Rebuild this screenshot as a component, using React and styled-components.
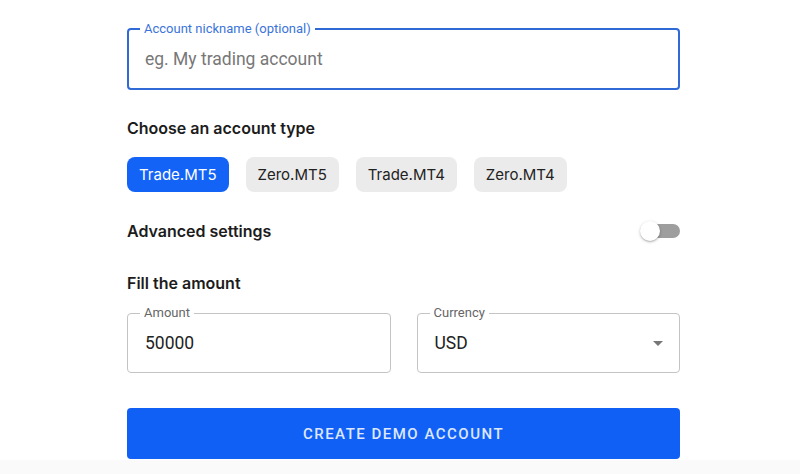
import styled, { createGlobalStyle } from "styled-components";

const Global = createGlobalStyle`
  body {
    margin: 0;
    background: #ffffff;
    font-family: Roboto, "Liberation Sans", sans-serif;
  }
`;

const Page = styled.div`
  min-height: 474px;
  display: flex;
  flex-direction: column;
`;

const Form = styled.div`
  width: 553px;
  margin: 0 0 0 127px;
  padding: 23px 0 1px;
  display: flex;
  flex-direction: column;
`;

const Footer = styled.div`
  flex: 1;
  background: #fafafa;
`;

const Field = styled.fieldset`
  margin: 0;
  padding: 0 ${(p) => (p.focused ? 11 : 12)}px 5px;
  border: ${(p) => (p.focused ? "2px solid #2f6ad6" : "1px solid #c4c4c4")};
  border-radius: 4px;
  min-width: 0;
  flex: 1;
`;

const Legend = styled.legend`
  padding: 0 4px;
  font-size: 13px;
  line-height: 12px;
  color: ${(p) => (p.focused ? "#3b74d9" : "#666")};
`;

const Input = styled.input`
  display: block;
  width: 100%;
  box-sizing: border-box;
  height: ${(p) => p.h}px;
  border: none;
  outline: none;
  padding: 0 0 0 5px;
  background: transparent;
  font-family: Roboto, "Liberation Sans", sans-serif;
  font-size: 17.5px;
  color: #222;
  &::placeholder {
    color: #777;
  }
`;

const SelectValue = styled.div`
  height: 48px;
  display: flex;
  align-items: center;
  justify-content: space-between;
  padding-left: 5px;
  font-size: 17.5px;
  color: #222;
`;

const Caret = styled.span`
  width: 0;
  height: 0;
  border-left: 5px solid transparent;
  border-right: 5px solid transparent;
  border-top: 5px solid #777;
  margin-right: 4px;
`;

const Heading = styled.h3`
  margin: 0;
  font-family: Inter, "Noto Sans", sans-serif;
  font-size: 16px;
  line-height: 24px;
  font-weight: 600;
  color: #1c1c1c;
`;

const ChipRow = styled.div`
  display: flex;
  gap: 17px;
  margin-top: 17px;
`;

const Chip = styled.button`
  height: 35px;
  padding: 0 12px;
  border: none;
  border-radius: 8px;
  font-family: Inter, "Noto Sans", sans-serif;
  font-size: 15px;
  background: ${(p) => (p.active ? "#1263f6" : "#ebebeb")};
  color: ${(p) => (p.active ? "#fff" : "#222")};
`;

const SettingsRow = styled.div`
  display: flex;
  align-items: center;
  justify-content: space-between;
  margin-top: 27px;
  height: 24px;
`;

const Switch = styled.div`
  position: relative;
  width: 40px;
  height: 20px;
  flex-shrink: 0;
`;

const Track = styled.div`
  position: absolute;
  right: 0;
  top: 3px;
  width: 34px;
  height: 14px;
  border-radius: 7px;
  background: #9e9e9e;
`;

const Thumb = styled.div`
  position: absolute;
  left: 0;
  top: 0;
  width: 20px;
  height: 20px;
  border-radius: 50%;
  background: #fff;
  box-shadow: 0 1px 3px rgba(0, 0, 0, 0.25), 0 1px 1px rgba(0, 0, 0, 0.12);
`;

const FieldRow = styled.div`
  display: flex;
  gap: 26px;
  margin-top: 12px;
`;

const Submit = styled.button`
  margin-top: 35px;
  height: 51px;
  border: none;
  border-radius: 4px;
  background: #1160f6;
  color: #dde7ff;
  font-family: Roboto, "Liberation Sans", sans-serif;
  font-weight: 500;
  font-size: 15px;
  letter-spacing: 1.5px;
  text-transform: uppercase;
`;

const types = ["Trade.MT5", "Zero.MT5", "Trade.MT4", "Zero.MT4"];

export default function App() {
  return (
    <Page>
      <Global />
      <Form>
        <Field focused>
          <Legend focused>Account nickname (optional)</Legend>
          <Input h={48} placeholder="eg. My trading account" />
        </Field>

        <Heading style={{ marginTop: 26 }}>Choose an account type</Heading>
        <ChipRow>
          {types.map((t, i) => (
            <Chip key={t} active={i === 0}>
              {t}
            </Chip>
          ))}
        </ChipRow>

        <SettingsRow>
          <Heading>Advanced settings</Heading>
          <Switch>
            <Track />
            <Thumb />
          </Switch>
        </SettingsRow>

        <Heading style={{ marginTop: 28 }}>Fill the amount</Heading>
        <FieldRow>
          <Field>
            <Legend>Amount</Legend>
            <Input h={48} defaultValue="50000" />
          </Field>
          <Field>
            <Legend>Currency</Legend>
            <SelectValue>
              USD
              <Caret />
            </SelectValue>
          </Field>
        </FieldRow>

        <Submit>Create demo account</Submit>
      </Form>
      <Footer />
    </Page>
  );
}
